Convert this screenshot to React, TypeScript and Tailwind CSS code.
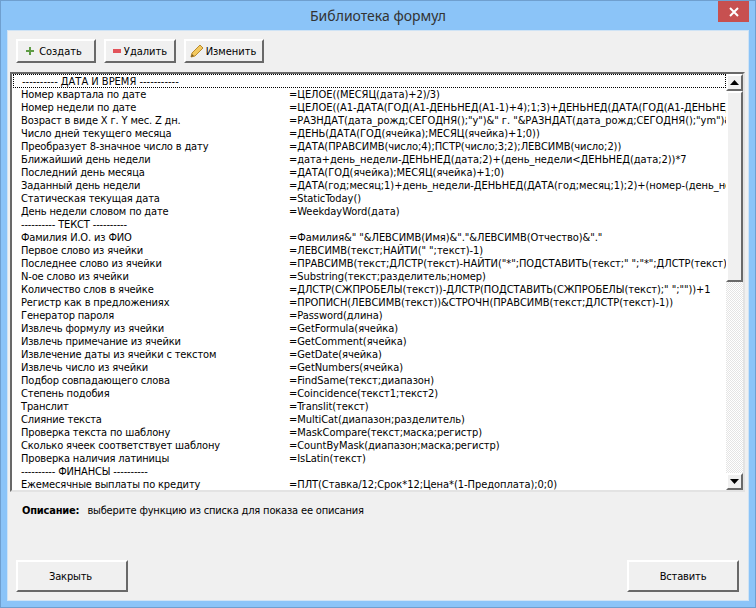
import React from 'react';

const rows: [string, string][] = [
  ['Номер квартала по дате', '=ЦЕЛОЕ((МЕСЯЦ(дата)+2)/3)'],
  ['Номер недели по дате', '=ЦЕЛОЕ((A1-ДАТА(ГОД(A1-ДЕНЬНЕД(A1-1)+4);1;3)+ДЕНЬНЕД(ДАТА(ГОД(A1-ДЕНЬНЕД(A1-1)+4);1;3))+5)/7)'],
  ['Возраст в виде X г. Y мес. Z дн.', '=РАЗНДАТ(дата_рожд;СЕГОДНЯ();"y")&" г. "&РАЗНДАТ(дата_рожд;СЕГОДНЯ();"ym")&" мес. "'],
  ['Число дней текущего месяца', '=ДЕНЬ(ДАТА(ГОД(ячейка);МЕСЯЦ(ячейка)+1;0))'],
  ['Преобразует 8-значное число в дату', '=ДАТА(ПРАВСИМВ(число;4);ПСТР(число;3;2);ЛЕВСИМВ(число;2))'],
  ['Ближайший день недели', '=дата+день_недели-ДЕНЬНЕД(дата;2)+(день_недели<ДЕНЬНЕД(дата;2))*7'],
  ['Последний день месяца', '=ДАТА(ГОД(ячейка);МЕСЯЦ(ячейка)+1;0)'],
  ['Заданный день недели', '=ДАТА(год;месяц;1)+день_недели-ДЕНЬНЕД(ДАТА(год;месяц;1);2)+(номер-(день_недели'],
  ['Статическая текущая дата', '=StaticToday()'],
  ['День недели словом по дате', '=WeekdayWord(дата)'],
  ['---------- ТЕКСТ ----------', ''],
  ['Фамилия И.О. из ФИО', '=Фамилия&" "&ЛЕВСИМВ(Имя)&"."&ЛЕВСИМВ(Отчество)&"."'],
  ['Первое слово из ячейки', '=ЛЕВСИМВ(текст;НАЙТИ(" ";текст)-1)'],
  ['Последнее слово из ячейки', '=ПРАВСИМВ(текст;ДЛСТР(текст)-НАЙТИ("*";ПОДСТАВИТЬ(текст;" ";"*";ДЛСТР(текст)'],
  ['N-ое слово из ячейки', '=Substring(текст;разделитель;номер)'],
  ['Количество слов в ячейке', '=ДЛСТР(СЖПРОБЕЛЫ(текст))-ДЛСТР(ПОДСТАВИТЬ(СЖПРОБЕЛЫ(текст);" ";""))+1'],
  ['Регистр как в предложениях', '=ПРОПИСН(ЛЕВСИМВ(текст))&СТРОЧН(ПРАВСИМВ(текст;ДЛСТР(текст)-1))'],
  ['Генератор пароля', '=Password(длина)'],
  ['Извлечь формулу из ячейки', '=GetFormula(ячейка)'],
  ['Извлечь примечание из ячейки', '=GetComment(ячейка)'],
  ['Извлечение даты из ячейки с текстом', '=GetDate(ячейка)'],
  ['Извлечь число из ячейки', '=GetNumbers(ячейка)'],
  ['Подбор совпадающего слова', '=FindSame(текст;диапазон)'],
  ['Степень подобия', '=Coincidence(текст1;текст2)'],
  ['Транслит', '=Translit(текст)'],
  ['Слияние текста', '=MultiCat(диапазон;разделитель)'],
  ['Проверка текста по шаблону', '=MaskCompare(текст;маска;регистр)'],
  ['Сколько ячеек соответствует шаблону', '=CountByMask(диапазон;маска;регистр)'],
  ['Проверка наличия латиницы', '=IsLatin(текст)'],
  ['---------- ФИНАНСЫ ----------', ''],
  ['Ежемесячные выплаты по кредиту', '=ПЛТ(Ставка/12;Срок*12;Цена*(1-Предоплата);0;0)'],
];

const raised = 'border-2 border-t-white border-l-white border-b-[#696969] border-r-[#696969] bg-[#f0f0f0]';

function ToolButton({ layout, icon, label }: { layout: string; icon: React.ReactNode; label: string }) {
  return (
    <button className={`${raised} ${layout} h-[24px] flex items-center justify-center`}>
      {icon}
      <span>{label}</span>
    </button>
  );
}

function ScrollArrow({ up }: { up?: boolean }) {
  return (
    <div className={`${raised} h-[17px] w-[17px] flex items-center justify-center shrink-0`}>
      <svg width="9" height="5" viewBox="0 0 9 5">
        <path d={up ? 'M4.5 0 L9 5 L0 5 Z' : 'M0 0 L9 0 L4.5 5 Z'} fill="#000" />
      </svg>
    </div>
  );
}

export default function App() {
  return (
    <div className="w-[756px] h-[608px] bg-[#8bc4f8] border border-[#6f9fcf] flex flex-col relative overflow-hidden text-[11px] leading-[13px] text-black [font-stretch:condensed] font-['DejaVu_Sans',sans-serif]">
      <div className="h-[29px] flex items-center justify-center text-[14px] text-[#333] [font-stretch:normal] font-['Noto_Sans',sans-serif]">
        Библиотека формул
      </div>
      <div className="absolute right-[6px] top-0 w-[31px] h-[21px] bg-[#c75050] flex items-center justify-center">
        <svg width="10" height="10" viewBox="0 0 10 10">
          <path d="M1 1 L9 9 M9 1 L1 9" stroke="#fff" strokeWidth="2" />
        </svg>
      </div>

      <div className="mx-[6px] h-[571px] bg-[#f0f0f0] border border-[#cfe3f5] flex flex-col">
        <div className="flex gap-[8px] pl-[8px] pt-[8px] h-[40px]">
          <ToolButton
            layout="w-[80px] gap-[5px] pr-[4px]"
            label="Создать"
            icon={
              <svg width="8" height="8" viewBox="0 0 8 8">
                <path d="M3 0 H5 V3 H8 V5 H5 V8 H3 V5 H0 V3 H3 Z" fill="#5f9c45" />
              </svg>
            }
          />
          <ToolButton
            layout="w-[72px] gap-[3px]"
            label="Удалить"
            icon={
              <svg width="8" height="4" viewBox="0 0 8 4">
                <rect width="8" height="4" fill="#e2535a" />
              </svg>
            }
          />
          <ToolButton
            layout="w-[80px] gap-[2px] pr-[2px]"
            label="Изменить"
            icon={
              <svg width="14" height="14" viewBox="0 0 14 14">
                <path d="M1 13 L2 9 L10 1 L13 4 L5 12 Z" fill="#f3c95f" stroke="#b98b2f" strokeWidth="1" />
                <path d="M1 13 L2 10 L4 12 Z" fill="#7a5a20" />
              </svg>
            }
          />
        </div>

        <div className="ml-[2px] mt-[1px] w-[735px] h-[420px] shrink-0 bg-white border-2 border-t-[#696969] border-l-[#696969] border-b-[#e3e3e3] border-r-[#e3e3e3] flex">
          <div className="flex-1 min-w-0 overflow-hidden">
            <div className="h-[14px] ml-[1px] border border-dotted border-black flex items-center whitespace-nowrap pl-[8px]">
              ---------- ДАТА И ВРЕМЯ -----------
            </div>
            {rows.map(([name, formula]) => (
              <div key={name} className="h-[13px] flex whitespace-nowrap pl-[9px]">
                <div className="w-[268px] shrink-0 tracking-[-0.15px]">{name}</div>
                <div className="tracking-[-0.05px]">{formula}</div>
              </div>
            ))}
          </div>
          <div className="w-[17px] shrink-0 flex flex-col bg-[repeating-conic-gradient(#ffffff_0_25%,#e4e4e4_0_50%)] bg-[length:2px_2px]">
            <ScrollArrow up />
            <div className={`${raised} h-[191px] w-[17px]`} />
            <div className="flex-1" />
            <ScrollArrow />
          </div>
        </div>

        <div className="flex gap-[8px] pl-[14px] pt-[12px] h-[68px] shrink-0">
          <span className="font-bold tracking-[-0.2px]">Описание:</span>
          <span className="tracking-[-0.17px]">выберите функцию из списка для показа ее описания</span>
        </div>

        <div className="flex justify-between pl-[8px] pr-[9px]">
          <button className={`${raised} w-[112px] h-[32px] pr-[3px] tracking-[-0.15px]`}>Закрыть</button>
          <button className={`${raised} w-[112px] h-[32px] tracking-[-0.15px]`}>Вставить</button>
        </div>
      </div>
    </div>
  );
}
